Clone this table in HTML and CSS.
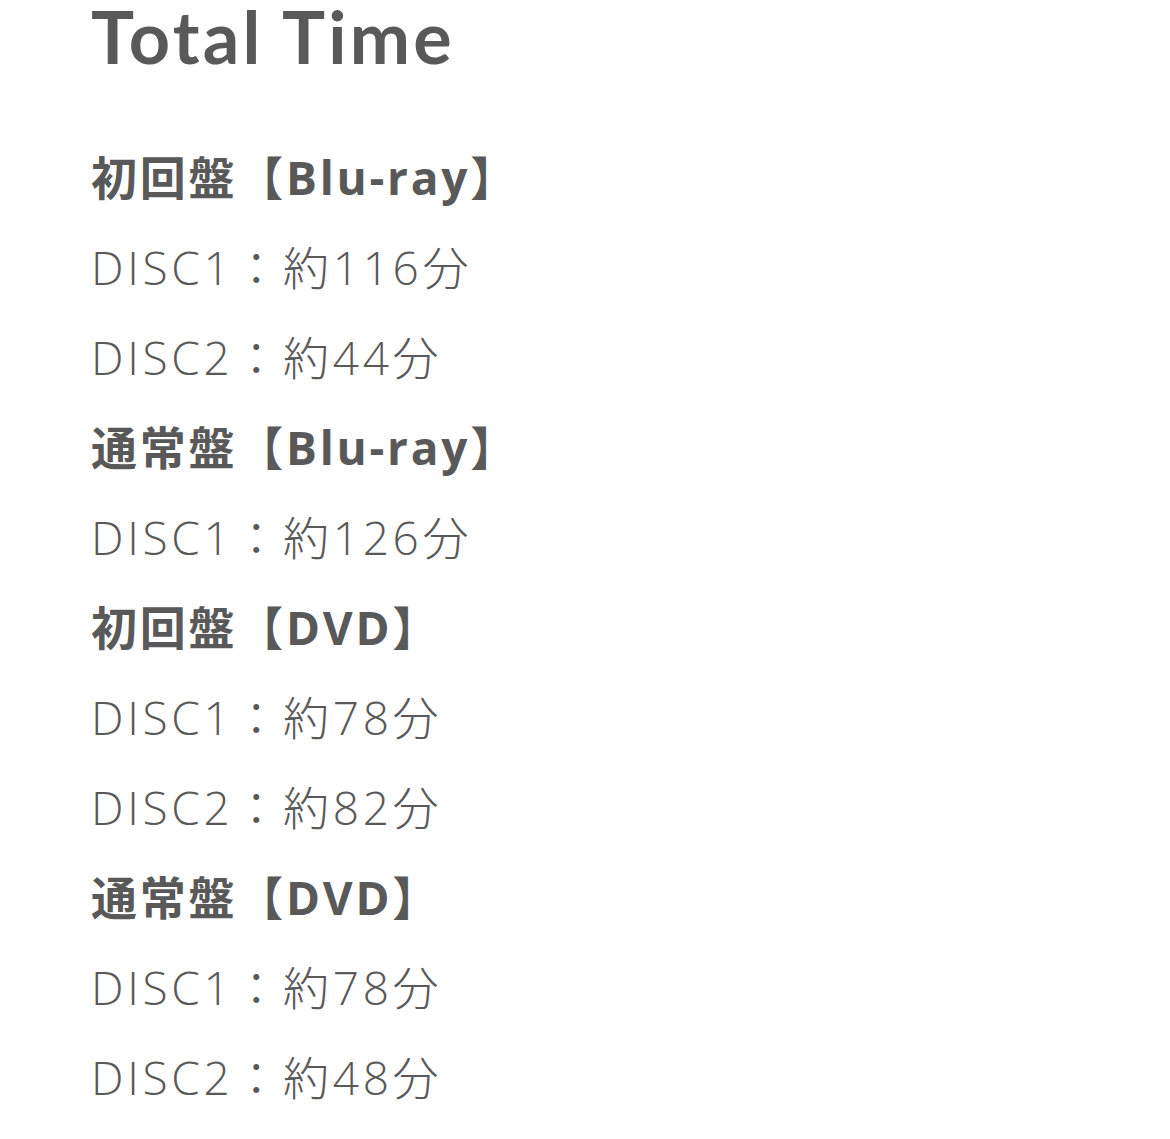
FILE: index.html
```html
<!DOCTYPE html>
<html lang="ja">
<head>
<meta charset="utf-8">
<link rel="stylesheet" href="styles.css">
</head>
<body>
<section class="total">
  <h1 class="title">Total Time</h1>
  <ul class="list">
    <li class="head">初回盤【Blu-ray】</li>
    <li class="item">DISC1：約116分</li>
    <li class="item">DISC2：約44分</li>
    <li class="head">通常盤【Blu-ray】</li>
    <li class="item">DISC1：約126分</li>
    <li class="head">初回盤【DVD】</li>
    <li class="item">DISC1：約78分</li>
    <li class="item">DISC2：約82分</li>
    <li class="head">通常盤【DVD】</li>
    <li class="item">DISC1：約78分</li>
    <li class="item">DISC2：約48分</li>
  </ul>
</section>
</body>
</html>
```

FILE: styles.css
```css
html, body {
  margin: 0;
  padding: 0;
  background: #ffffff;
}
.total {
  padding-left: 91px;
  color: #595959;
  font-family: "Open Sans", "Noto Sans CJK JP", sans-serif;
}
.title {
  margin: 0 0 60px 0;
  font-family: "Lato", "Open Sans", sans-serif;
  font-size: 72px;
  line-height: 72px;
  font-weight: 700;
  letter-spacing: 0.045em;
}
.list {
  list-style: none;
  margin: 0;
  padding: 0;
}
.list li {
  font-size: 46px;
  line-height: 90px;
  white-space: nowrap;
}
.head {
  font-weight: 700;
  letter-spacing: 0.06em;
}
.item {
  font-weight: 300;
  letter-spacing: 0.08em;
}
```
